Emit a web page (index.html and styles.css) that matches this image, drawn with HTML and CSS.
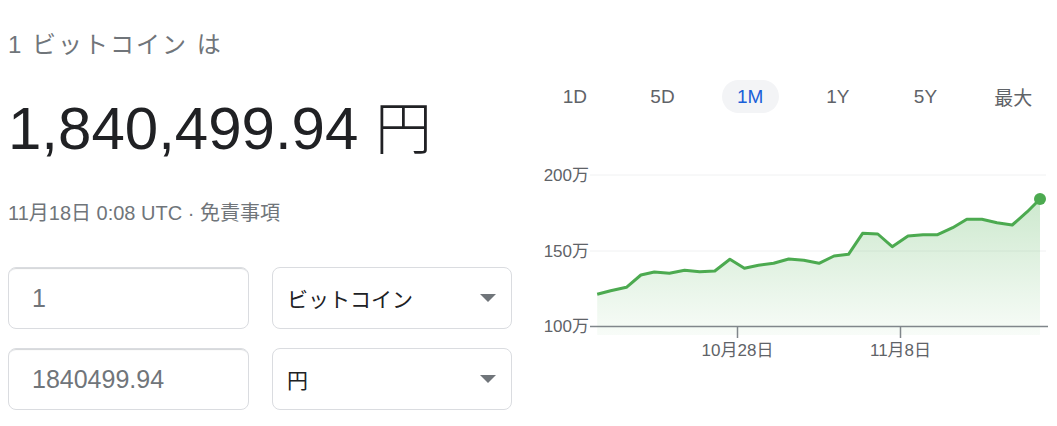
FILE: index.html
```html
<!DOCTYPE html>
<html lang="ja">
<head>
<meta charset="utf-8">
<title>ビットコイン</title>
<link rel="stylesheet" href="styles.css">
</head>
<body>
<div class="page">
  <section class="left">
    <div class="title">1 ビットコイン は</div>
    <div class="value">1,840,499.94 <span class="yen">円</span></div>
    <div class="meta">11月18日 0:08 UTC · 免責事項</div>
    <div class="conv">
      <div class="row">
        <div class="field">1</div>
        <div class="select"><span>ビットコイン</span><span class="caret"></span></div>
      </div>
      <div class="row">
        <div class="field">1840499.94</div>
        <div class="select"><span>円</span><span class="caret"></span></div>
      </div>
    </div>
  </section>
  <section class="right">
    <div class="tabs">
      <div class="tab">1D</div>
      <div class="tab">5D</div>
      <div class="tab"><span class="active">1M</span></div>
      <div class="tab">1Y</div>
      <div class="tab">5Y</div>
      <div class="tab">最大</div>
    </div>
    <svg class="chart" width="526" height="220" viewBox="531 150 526 220">
      <defs>
        <linearGradient id="fill" x1="0" y1="0" x2="0" y2="1">
          <stop offset="0" stop-color="#4caf50" stop-opacity="0.28"/>
          <stop offset="1" stop-color="#4caf50" stop-opacity="0.04"/>
        </linearGradient>
      </defs>
      <line x1="590" y1="175" x2="1046" y2="175" class="grid"/>
      <line x1="590" y1="251" x2="1046" y2="251" class="grid"/>
      <path class="area" d="M597.2,294.3 L610.6,290.7 L626.4,287.3 L640.9,275 L654.3,272 L669.4,273.3 L684.6,270.3 L699.7,271.7 L714.8,271 L729.9,259.3 L744.4,268.3 L758.5,265.3 L773.6,263.3 L788.7,259 L803.8,260.3 L819,263.3 L834,256 L848.5,254.3 L862.6,233.3 L877.8,234 L892.2,246.7 L908,236 L923,234.7 L937.6,234.7 L952.7,227.7 L966.8,219.3 L981.9,219.3 L997,222.7 L1012.2,225 L1027.3,211.7 L1040,199 L1040,335 L597.2,335 Z"/>
      <line x1="590" y1="326.5" x2="1048" y2="326.5" class="axis"/>
      <line x1="737.5" y1="326.5" x2="737.5" y2="338" class="axis"/>
      <line x1="900.5" y1="326.5" x2="900.5" y2="338" class="axis"/>
      <polyline class="line" points="597.2,294.3 610.6,290.7 626.4,287.3 640.9,275 654.3,272 669.4,273.3 684.6,270.3 699.7,271.7 714.8,271 729.9,259.3 744.4,268.3 758.5,265.3 773.6,263.3 788.7,259 803.8,260.3 819,263.3 834,256 848.5,254.3 862.6,233.3 877.8,234 892.2,246.7 908,236 923,234.7 937.6,234.7 952.7,227.7 966.8,219.3 981.9,219.3 997,222.7 1012.2,225 1027.3,211.7 1040,199"/>
      <circle cx="1040" cy="199" r="6" class="dot"/>
      <text x="589" y="181" class="ylab">200万</text>
      <text x="589" y="257" class="ylab">150万</text>
      <text x="589" y="332" class="ylab">100万</text>
      <text x="737.5" y="356" class="xlab">10月28日</text>
      <text x="900.5" y="356" class="xlab">11月8日</text>
    </svg>
  </section>
</div>
</body>
</html>
```

FILE: styles.css
```css
html, body {
  margin: 0;
  padding: 0;
  background: #ffffff;
  overflow: hidden;
}
body {
  font-family: "Liberation Sans", Arial, "Noto Sans CJK JP", sans-serif;
  color: #202124;
}
.page {
  display: grid;
  grid-template-columns: 504px 526px;
  column-gap: 19px;
  padding-left: 8px;
  width: 1057px;
  box-sizing: border-box;
}
.left {
  padding-top: 30px;
}
.title {
  font-size: 24px;
  line-height: 30px;
  color: #70757a;
  letter-spacing: 2px;
}
.value {
  margin-top: 34px;
  font-size: 60px;
  line-height: 70px;
  color: #202124;
  white-space: nowrap;
}
.yen {
  font-weight: 300;
  font-size: 57px;
}
.meta {
  margin-top: 37px;
  font-size: 20px;
  line-height: 24px;
  color: #70757a;
}
.conv {
  margin-top: 42px;
  display: flex;
  flex-direction: column;
  gap: 19px;
}
.row {
  display: flex;
  gap: 23px;
}
.field, .select {
  box-sizing: border-box;
  height: 62px;
  border: 1px solid #dadce0;
  border-radius: 8px;
  display: flex;
  align-items: center;
}
.field {
  width: 241px;
  padding-left: 23px;
  font-size: 25px;
  color: #70757a;
  box-shadow: inset 0 2px 1px -1px #d3d5d8;
}
.select {
  width: 240px;
  padding: 0 15px 0 14px;
  justify-content: space-between;
  font-size: 21px;
  color: #202124;
}
.caret {
  width: 0;
  height: 0;
  border-left: 8px solid transparent;
  border-right: 8px solid transparent;
  border-top: 8px solid #70757a;
}
.right {
  padding-top: 80px;
  display: flex;
  flex-direction: column;
}
.tabs {
  display: grid;
  grid-template-columns: repeat(6, 1fr);
  height: 33px;
}
.tab {
  display: flex;
  align-items: center;
  justify-content: center;
  font-size: 19px;
  color: #5f6368;
}
.active {
  display: flex;
  align-items: center;
  justify-content: center;
  width: 57px;
  height: 33px;
  border-radius: 17px;
  background: #f3f4f6;
  color: #1a5fd8;
}
.chart {
  display: block;
  margin-top: 37px;
}
.grid {
  stroke: #f0f1f2;
  stroke-width: 1;
}
.axis {
  stroke: #80868b;
  stroke-width: 1.5;
}
.area {
  fill: url(#fill);
}
.line {
  fill: none;
  stroke: #4caa50;
  stroke-width: 3;
  stroke-linejoin: round;
}
.dot {
  fill: #4caa50;
}
.ylab {
  font-family: "Liberation Sans", Arial, "Noto Sans CJK JP", sans-serif;
  font-size: 17px;
  fill: #5f6368;
  text-anchor: end;
}
.xlab {
  font-family: "Liberation Sans", Arial, "Noto Sans CJK JP", sans-serif;
  font-size: 17px;
  fill: #5f6368;
  text-anchor: middle;
}
```
